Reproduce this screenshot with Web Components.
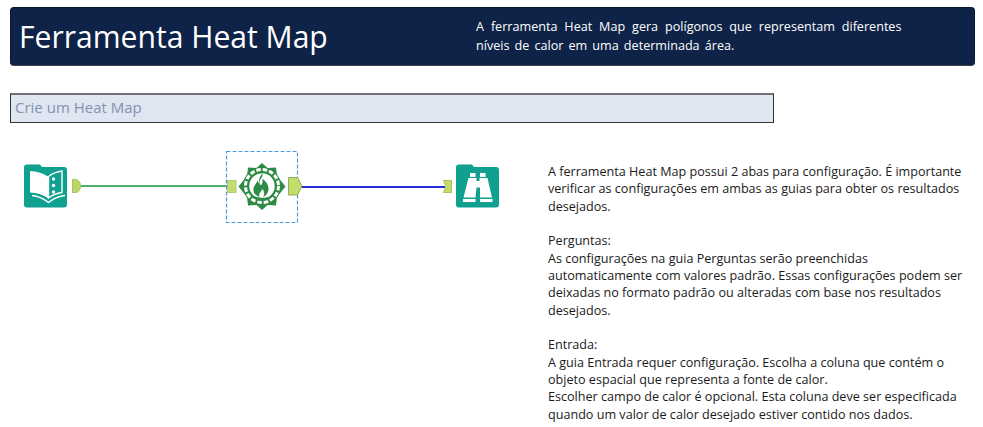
<!DOCTYPE html>
<html lang="pt"><head><meta charset="utf-8"><title>Heat Map</title>
<style>html,body{margin:0;background:#fff}body{font-family:"Open Sans","Noto Sans",sans-serif}</style></head>
<body>
<hm-page>
<hm-header slot="header"><span slot="title">Ferramenta Heat Map</span><span style="word-spacing:3.65px">A ferramenta Heat Map gera polígonos que representam diferentes</span><br><span style="word-spacing:1.85px">níveis de calor em uma determinada área.</span></hm-header>
<hm-section slot="section">Crie um Heat Map</hm-section>
<hm-workflow slot="flow"></hm-workflow>
<hm-notes slot="notes">A ferramenta Heat Map possui 2 abas para configuração. É importante<br>verificar as configurações em ambas as guias para obter os resultados<br>desejados.<br><br>Perguntas:<br>As configurações na guia Perguntas serão preenchidas<br>automaticamente com valores padrão. Essas configurações podem ser<br>deixadas no formato padrão ou alteradas com base nos resultados<br>desejados.<br><br>Entrada:<br>A guia Entrada requer configuração. Escolha a coluna que contém o<br>objeto espacial que representa a fonte de calor.<br>Escolher campo de calor é opcional. Esta coluna deve ser especificada<br>quando um valor de calor desejado estiver contido nos dados.</hm-notes>
</hm-page>
<script>
function def(name, html){
  customElements.define(name, class extends HTMLElement{
    constructor(){super();this.attachShadow({mode:'open'}).innerHTML=html;}
  });
}
def('hm-page',`<style>:host{display:block;width:983px;height:427px;box-sizing:border-box;padding:7px 8px 0 10px;overflow:hidden}
.main{display:flex;margin-top:1px}
.left{width:538px;flex:none}
</style><slot name="header"></slot><slot name="section"></slot><div class="main"><div class="left"><slot name="flow"></slot></div><slot name="notes"></slot></div>`);
def('hm-header',`<style>:host{display:flex;box-sizing:border-box;width:965px;height:59px;background:#0e2347;border:1px solid #0a1a36;border-bottom:1px solid #3c4047;border-radius:4px;color:#fff}
.t{width:465px;flex:none;padding-left:8px;font-size:30.1px;line-height:58px;white-space:nowrap;box-sizing:border-box}
.d{font-size:12.6px;line-height:19px;padding-top:9px;white-space:nowrap}
</style><div class="t"><slot name="title"></slot></div><div class="d"><slot></slot></div>`);
def('hm-section',`<style>:host{display:block;box-sizing:border-box;width:764px;height:30px;margin-top:27px;padding-left:4px;background:#dfe5f1;border:1px solid #333;border-top:2px solid #6f7078;color:#8492b0;font-size:15px;line-height:24px;white-space:nowrap}</style><slot></slot>`);
def('hm-workflow',`<style>:host{display:block;position:relative;height:300px}
svg{position:absolute;left:0;top:0}
</style>
<svg width="538" height="120" viewBox="0 0 538 120">
<g transform="translate(-10,-124)">
 <path d="M79 186H229" stroke="#4caf6e" stroke-width="2" fill="none"/>
 <path d="M301 187H445" stroke="#2b2bdc" stroke-width="2" fill="none"/>
 <path d="M27 164.500h13l2 2.500h22a3 3 0 0 1 3 3v34.500a3 3 0 0 1-3 3H27a3 3 0 0 1-3-3V167.500a3 3 0 0 1 3-3z" fill="#0fa08f"/>
 <path d="M30 171c6.500 .3 12.500 2 18 5.500v21.500c-5.500-3.500-11.500-5.200-18-5.500z" fill="#fff"/>
 <path d="M48.500 176.500c4-3 8-4.800 13.500-5.500v21.500c-5.500 .7-9.500 2.500-13.500 5.500z" fill="none" stroke="#fff" stroke-width="1.400"/>
 <path d="M32 195.500c6.500 .5 11.500 3 16.500 7 5-4 10-6.500 16.500-7" fill="none" stroke="#fff" stroke-width="1.400"/>
 <circle cx="53.500" cy="179" r="1.700" fill="#fff"/><circle cx="53.500" cy="185.500" r="1.700" fill="#fff"/><circle cx="53.500" cy="192" r="1.700" fill="#fff"/>
 <path d="M72.500 179.500h3c3 0 5 3 5 6.500s-2 6.500-5 6.500h-3z" fill="#bcd767" stroke="#a5c35e"/>
 <rect x="226.500" y="151.500" width="71" height="71" fill="none" stroke="#4a9be0" stroke-width="1.200" stroke-dasharray="4 2"/>
 <rect x="227.500" y="180.500" width="8.500" height="12" fill="#c3dc6b" stroke="#b2cb78"/>
 <path d="M288.500 177.500h9l4.500 8.500-4.500 9h-9z" fill="#c3dc6b" stroke="#8fb05a"/>
 <path d="M262 163l5.500 5 8.500-.5 1 8.500 8.500 10.500-8.500 10.500-1 8.500-8.500-.5-5.500 5-5.500-5-8.500.5-1-8.500-8.500-10.500 8.500-10.500 1-8.500 8.500 .5z" fill="#2e8b45"/>
 <circle cx="262" cy="186" r="19" fill="#2e8b45"/>
 <circle cx="262" cy="186" r="16.500" fill="none" stroke="#fff" stroke-width="3" stroke-dasharray="4.500 2"/>
 <circle cx="262" cy="186" r="13.500" fill="#fff" stroke="#2e8b45" stroke-width="1.500"/>
 <g transform="translate(262,186) scale(1.15) translate(-262.500,-185)">
 <path d="M262.500 174c2 3-3 5-2 9 .5 1.500 1.500 1.500 2 0 1-2 0-3 .5-4 3 2 6 6 5 10-.5 3-2.500 5-4.500 5.500 1.500-2 1-5-.5-7-1 2-3 3-3 5.500 0 .7.300 1.200.5 1.500-3-.7-5.500-3-5.500-6.500 0-3 3-5 3.500-8 .3 1 .8 2 1.500 2.500-.3-3 .5-6 3-8.500z" fill="#2e8b45"/>
 <path d="M254 193c3 3 14 3 17 0v2c-3 2.500-14 2.500-17 0z" fill="#2e8b45"/>
 </g>
 <path d="M443.500 180.500h8v12h-8l2.500-6z" fill="#c3dc6b" stroke="#a5c35e"/>
 <path d="M459 164.500h13l2 2.500h22a3 3 0 0 1 3 3v34.500a3 3 0 0 1-3 3H459a3 3 0 0 1-3-3V167.500a3 3 0 0 1 3-3z" fill="#0fa08f"/>
 <path d="M470 173h5.500v4h-5.500zM480 173h5.500v4h-5.500z" fill="#fff"/>
 <path d="M468.500 178h8v3h3v-3h8l4.500 19.500h-12v-10h-3.500l-1 10h-12z" fill="#fff"/>
 <path d="M463 199h12.500v3h-12.500zM480 199h12.500v3h-12.500z" fill="#fff"/>
</g></svg>`);
def('hm-notes',`<style>:host{display:block;font-size:12.6px;line-height:17.35px;color:#1a1a1a;white-space:nowrap;padding-top:39px}</style><slot></slot>`);
</script>
</body></html>
